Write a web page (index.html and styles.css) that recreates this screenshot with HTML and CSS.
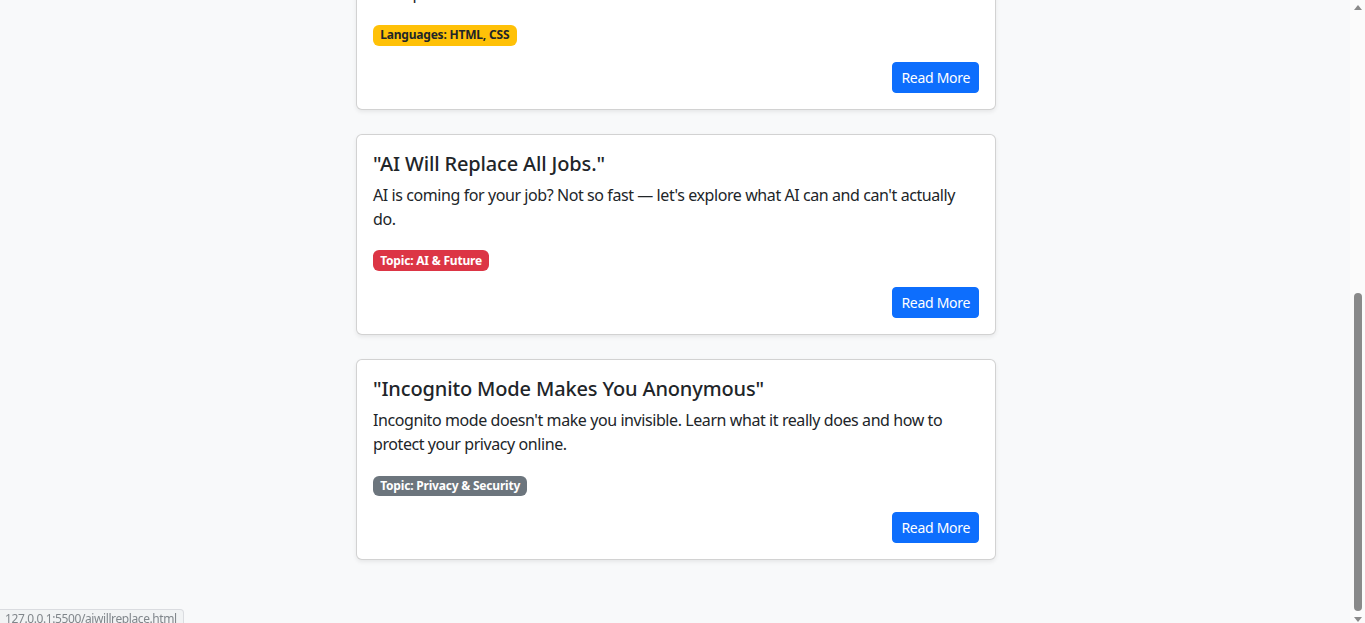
FILE: index.html
```html
<!DOCTYPE html>
<html lang="en">
<head>
<meta charset="utf-8">
<title>Tech Myths</title>
<link rel="stylesheet" href="styles.css">
</head>
<body>
<div class="screen">
  <div class="viewport">
    <main class="list">
      <article class="card">
        <h5 class="card-title">"You Need to Be a Genius to Code."</h5>
        <p class="card-text">You don't need to be a genius to code — anyone can learn with practice and simple examples.</p>
        <p class="tags"><span class="badge badge-warning">Languages: HTML, CSS</span></p>
        <div class="actions"><a class="btn" href="#">Read More</a></div>
      </article>
      <article class="card">
        <h5 class="card-title">"AI Will Replace All Jobs."</h5>
        <p class="card-text">AI is coming for your job? Not so fast — let's explore what AI can and can't actually do.</p>
        <p class="tags"><span class="badge badge-danger">Topic: AI &amp; Future</span></p>
        <div class="actions"><a class="btn" href="#">Read More</a></div>
      </article>
      <article class="card">
        <h5 class="card-title">"Incognito Mode Makes You Anonymous"</h5>
        <p class="card-text">Incognito mode doesn't make you invisible. Learn what it really does and how to protect your privacy online.</p>
        <p class="tags"><span class="badge badge-secondary">Topic: Privacy &amp; Security</span></p>
        <div class="actions"><a class="btn" href="#">Read More</a></div>
      </article>
    </main>
  </div>
  <div class="scrollbar">
    <span class="arrow arrow-up"></span>
    <div class="track"><span class="thumb"></span></div>
    <span class="arrow arrow-down"></span>
  </div>
</div>
<div class="status">127.0.0.1:5500/aiwillreplace.html</div>
</body>
</html>
```
FILE: styles.css
```css
* { box-sizing: border-box; }
html, body { margin: 0; padding: 0; }
body {
  font-family: "Noto Sans", "Open Sans", Arial, sans-serif;
  font-size: 16px;
  line-height: 1.5;
  color: #212529;
  background: #f8f9fa;
  overflow: hidden;
}
.screen {
  display: flex;
  height: 623px;
}
.viewport {
  flex: 1;
  overflow: hidden;
  display: flex;
  flex-direction: column;
  justify-content: flex-end;
  background: #f8f9fa;
}
.list {
  flex-shrink: 0;
  width: 642px;
  margin: 0 auto;
  padding: 0 0 39px 2px;
}
.card {
  background: #fff;
  border: 1px solid rgba(0, 0, 0, 0.175);
  border-radius: 6px;
  box-shadow: 0 2px 4px rgba(0, 0, 0, 0.075);
  padding: 17px 16px 16px;
  margin-bottom: 24px;
}
.card-title {
  margin: 0 0 7px;
  font-size: 20px;
  font-weight: 500;
  line-height: 24px;
  letter-spacing: -0.15px;
}
.card-text {
  margin: 0 0 16px;
  letter-spacing: -0.42px;
}
.tags { margin: 0 0 16px; }
.badge {
  display: inline-block;
  padding: 4.2px 7.2px;
  font-size: 12px;
  font-weight: 700;
  line-height: 1;
  letter-spacing: -0.2px;
  border-radius: 6px;
  color: #fff;
  vertical-align: baseline;
  white-space: nowrap;
}
.badge-warning { background: #ffc107; color: #212529; }
.badge-danger { background: #dc3545; }
.badge-secondary { background: #6c757d; }
.actions {
  display: flex;
  justify-content: flex-end;
}
.btn {
  display: inline-block;
  padding: 4px 8px;
  font-size: 14px;
  line-height: 1.5;
  letter-spacing: -0.3px;
  color: #fff;
  background: #0d6efd;
  border: 1px solid #0d6efd;
  border-radius: 4px;
  text-decoration: none;
}
.scrollbar {
  width: 15px;
  flex-shrink: 0;
  background: #fbfbfb;
  display: flex;
  flex-direction: column;
  align-items: center;
}
.arrow {
  width: 0;
  height: 0;
  border-left: 4px solid transparent;
  border-right: 4px solid transparent;
  margin: 5px 0;
}
.arrow-up { border-bottom: 5px solid #8a8a8a; }
.arrow-down { border-top: 5px solid #8a8a8a; margin: 6px 0 1px; }
.track {
  flex: 1;
  width: 100%;
  display: flex;
  flex-direction: column;
  justify-content: flex-end;
  align-items: center;
}
.thumb {
  width: 8px;
  height: 318px;
  background: #8a8a8a;
  border-radius: 4px;
}
.status {
  position: fixed;
  left: 0;
  bottom: -8px;
  padding: 2px 6px 4px 5px;
  font-family: "Noto Sans", Arial, sans-serif;
  font-size: 12px;
  line-height: 14px;
  letter-spacing: -0.4px;
  color: #80868b;
  background: #f1f3f4;
  border: 1px solid #dadce0;
  border-left: none;
  border-top-right-radius: 4px;
}
```
